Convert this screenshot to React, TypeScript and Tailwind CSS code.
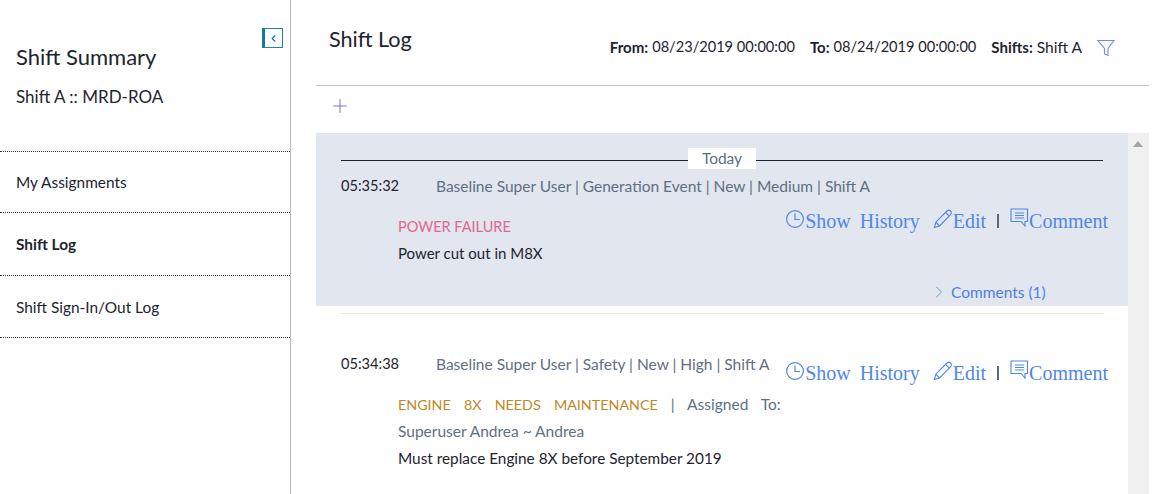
import { ChevronLeft, ChevronRight, Plus } from "lucide-react";

const sans = "font-['Lato','Noto_Sans',sans-serif]";

const navItems = [
  { label: "My Assignments", active: false, height: "h-[61px]" },
  { label: "Shift Log", active: true, height: "h-[63px]" },
  { label: "Shift Sign-In/Out Log", active: false, height: "h-[62px]" },
];

function Actions() {
  return (
    <div className="flex h-[24px] items-center font-['Liberation_Serif',serif] text-[20px] leading-[24px] text-[#4f86ec]">
      <svg width="20" height="20" viewBox="0 0 20 20" fill="none" stroke="currentColor" strokeWidth="1.2" className="-mt-[5px]">
        <circle cx="10" cy="10" r="8.4" />
        <path d="M10 4.5V10.5H15" />
      </svg>
      <span className="[word-spacing:4px]">Show History</span>
      <svg width="20" height="20" viewBox="0 0 20 20" fill="none" stroke="currentColor" strokeWidth="1.1" className="-mt-[5px] ml-[13px]">
        <path d="M1.5 18.5L2.8 13.2L14 2C15 1 16.6 1 17.6 2C18.6 3 18.6 4.6 17.6 5.6L6.6 17Z" />
        <path d="M2.8 13.2L6.6 17M12.6 3.4L16.3 7.1" />
      </svg>
      <span>Edit</span>
      <span className="ml-[11px] mr-[11px] h-[14px] w-[2px] bg-[#5a6a7a]" />
      <svg width="19" height="20" viewBox="0 0 19 20" fill="none" stroke="currentColor" strokeWidth="1.1" className="-mt-[7px]">
        <path d="M1 1H17.5V13.5H15V18L11 13.5H1Z" />
        <path d="M5 5H14M5 7.5H14M5 10H14" />
      </svg>
      <span>Comment</span>
    </div>
  );
}

export default function App() {
  return (
    <div className={`flex h-[494px] w-[1171px] overflow-hidden bg-white ${sans} text-[#1d2430]`}>
      <aside className="flex w-[291px] shrink-0 flex-col border-r border-[#b9b9c0]">
        <div className="flex justify-end pr-[7px] pt-[28px]">
          <button className="flex h-[20px] w-[21px] items-center justify-center border border-l-[3px] border-[#1c86a8] border-l-[#0f7c9e] bg-white">
            <ChevronLeft size={11} strokeWidth={2.5} className="text-[#1c6f9c]" />
          </button>
        </div>
        <h2 className="-mt-px pl-[16px] text-[22px] leading-[20px]">Shift Summary</h2>
        <p className="pl-[16px] pt-[20px] text-[17px] leading-[20px]">Shift A :: MRD-ROA</p>
        <nav className="mt-[44px] border-t border-dotted border-[#333]">
          {navItems.map((item) => (
            <div
              key={item.label}
              className={`flex items-center border-b border-dotted border-[#333] pl-[16px] pt-[2px] text-[15.4px] ${item.height} ${item.active ? "font-bold" : ""}`}
            >
              {item.label}
            </div>
          ))}
        </nav>
      </aside>

      <main className="flex min-w-0 flex-1 flex-col pl-[25px] pr-[22px]">
        <header className="flex h-[86px] shrink-0 items-start justify-between border-b border-[#c4c4c4]">
          <h1 className="pl-[13px] pt-[25px] text-[21.6px] leading-[28px]">Shift Log</h1>
          <div className="flex items-center pr-[34px] pt-[37px] text-[14.6px] leading-[20px]">
            <b className="text-[15px] font-bold">From:</b>
            <span className="ml-[4px]">08/23/2019 00:00:00</span>
            <b className="ml-[15px] text-[15px] font-bold">To:</b>
            <span className="ml-[4px]">08/24/2019 00:00:00</span>
            <b className="ml-[15px] text-[15px] font-bold">Shifts:</b>
            <span className="ml-[4px] text-[15.5px]">Shift A</span>
            <svg width="18" height="18" viewBox="0 0 18 18" fill="none" stroke="#6b8cf0" strokeWidth="1.1" className="ml-[15px] mt-[1px]">
              <path d="M1 1.5H17L11 9.5V16.5L7.5 15V9.5Z" />
            </svg>
          </div>
        </header>

        <div className="flex h-[47px] shrink-0 items-start pl-[14px] pt-[9px]">
          <Plus size={22} strokeWidth={1.1} className="-ml-[1px] text-[#6f7fd0]" />
        </div>

        <div className="flex min-h-0 flex-1">
          <div className="min-w-0 flex-1 text-[15.5px] leading-[20px]">
            <section className="h-[173px] bg-[#e2e6ee] px-[25px] pt-[15px]">
              <div className="flex h-[21px] items-center">
                <div className="mt-[3px] h-px flex-1 bg-[#1d2430]" />
                <span className="flex h-[21px] w-[68px] items-center justify-center bg-white pb-[1px] text-[#5e6f86]">Today</span>
                <div className="mt-[3px] h-px w-[347px] bg-[#1d2430]" />
              </div>
              <div className="mt-[7px] flex">
                <span className="w-[95px] text-[14.6px]">05:35:32</span>
                <span className="text-[#5e6f86]">Baseline Super User | Generation Event | New | Medium | Shift A</span>
              </div>
              <div className="mt-[11px] flex justify-between pl-[57px]">
                <div className="pt-[10px]">
                  <p className="text-[14.5px] text-[#e0688e]">POWER FAILURE</p>
                  <p className="mt-[6px] text-[15px]">Power cut out in M8X</p>
                </div>
                <div className="-mr-[5px] pt-[2px]">
                  <Actions />
                </div>
              </div>
              <div className="mt-[19px] flex items-center pl-[588px] text-[#4f7fe6]">
                <ChevronRight size={20} strokeWidth={1} className="text-[#5b7ee0]" />
                <span className="ml-[2px]">Comments (1)</span>
              </div>
            </section>

            <section className="px-[25px] pt-[7px]">
              <div className="h-px bg-[#e6e6e6]" />
              <div className="mt-[38px] flex justify-between">
                <div className="w-[444px]">
                  <div className="flex pt-[2px]">
                    <span className="w-[95px] text-[14.6px]">05:34:38</span>
                    <span className="whitespace-nowrap text-[#5e6f86]">Baseline Super User | Safety | New | High | Shift A</span>
                  </div>
                  <div className="pl-[57px] pt-[20px]">
                    <p className="whitespace-nowrap">
                      <span className="text-[14.3px] text-[#c4861e] [word-spacing:9.5px]">ENGINE 8X NEEDS MAINTENANCE</span>
                      <span className="text-[#5e6f86] [word-spacing:9px]"> | Assigned To:</span>
                    </p>
                    <p className="mt-[6px] text-[#5e6f86]">Superuser Andrea ~ Andrea</p>
                    <p className="mt-[7px] text-[15.35px]">Must replace Engine 8X before September 2019</p>
                  </div>
                </div>
                <div className="-mr-[5px] pt-[9px]">
                  <Actions />
                </div>
              </div>
            </section>
          </div>

          <div className="relative w-[21px] shrink-0 bg-[#f0f0f0]">
            <div className="absolute left-[5px] top-[8px] h-0 w-0 border-x-[5px] border-b-[6px] border-x-transparent border-b-[#a6a6a6]" />
          </div>
        </div>
      </main>
    </div>
  );
}
